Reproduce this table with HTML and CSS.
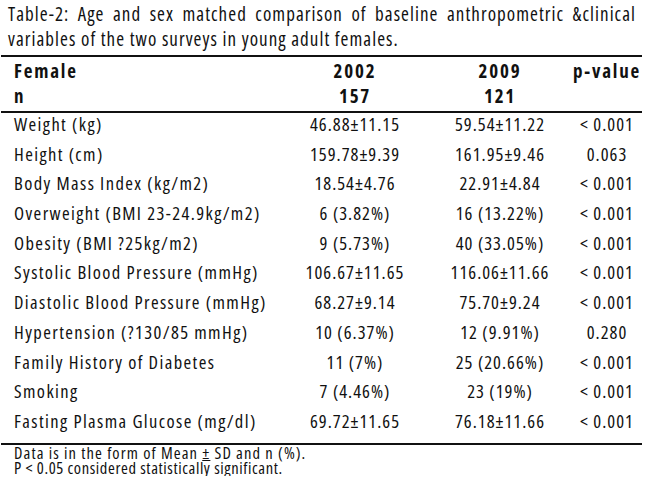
FILE: index.html
```html
<!DOCTYPE html>
<html>
<head>
<meta charset="utf-8">
<link rel="stylesheet" href="styles.css">
</head>
<body>
<div class="page">
  <p class="title"><span class="t1">Table-2: Age and sex matched comparison of baseline anthropometric &amp;clinical</span><span class="t2">variables of the two surveys in young adult females.</span></p>
  <div class="table">
    <div class="row head">
      <div class="c label">Female<br>n</div>
      <div class="c">2002<br>157</div>
      <div class="c">2009<br>121</div>
      <div class="c">p-value</div>
    </div>
    <div class="body">
      <div class="row"><div class="c label">Weight (kg)</div><div class="c">46.88±11.15</div><div class="c">59.54±11.22</div><div class="c">&lt; 0.001</div></div>
      <div class="row"><div class="c label">Height (cm)</div><div class="c">159.78±9.39</div><div class="c">161.95±9.46</div><div class="c">0.063</div></div>
      <div class="row"><div class="c label">Body Mass Index (kg/m2)</div><div class="c">18.54±4.76</div><div class="c">22.91±4.84</div><div class="c">&lt; 0.001</div></div>
      <div class="row"><div class="c label">Overweight (BMI 23-24.9kg/m2)</div><div class="c">6 (3.82%)</div><div class="c">16 (13.22%)</div><div class="c">&lt; 0.001</div></div>
      <div class="row"><div class="c label">Obesity (BMI ?25kg/m2)</div><div class="c">9 (5.73%)</div><div class="c">40 (33.05%)</div><div class="c">&lt; 0.001</div></div>
      <div class="row"><div class="c label">Systolic Blood Pressure (mmHg)</div><div class="c">106.67±11.65</div><div class="c">116.06±11.66</div><div class="c">&lt; 0.001</div></div>
      <div class="row"><div class="c label">Diastolic Blood Pressure (mmHg)</div><div class="c">68.27±9.14</div><div class="c">75.70±9.24</div><div class="c">&lt; 0.001</div></div>
      <div class="row"><div class="c label">Hypertension (?130/85 mmHg)</div><div class="c">10 (6.37%)</div><div class="c">12 (9.91%)</div><div class="c">0.280</div></div>
      <div class="row"><div class="c label">Family History of Diabetes</div><div class="c">11 (7%)</div><div class="c">25 (20.66%)</div><div class="c">&lt; 0.001</div></div>
      <div class="row"><div class="c label">Smoking</div><div class="c">7 (4.46%)</div><div class="c">23 (19%)</div><div class="c">&lt; 0.001</div></div>
      <div class="row"><div class="c label">Fasting Plasma Glucose (mg/dl)</div><div class="c">69.72±11.65</div><div class="c">76.18±11.66</div><div class="c">&lt; 0.001</div></div>
    </div>
  </div>
  <div class="notes">
    <p>Data is in the form of Mean <span class="pm">±</span> SD and n (%).</p>
    <p class="sig">P &lt; 0.05 considered statistically significant.</p>
  </div>
</div>
</body>
</html>
```
FILE: styles.css
```css
html, body {
  margin: 0;
  padding: 0;
  background: #ffffff;
}
.page {
  font-family: "Open Sans", "Liberation Sans", sans-serif;
  font-stretch: 75%;
  color: #111111;
  width: 650px;
}
.title {
  margin: 2px 14px 0 8px;
  font-size: 19px;
  line-height: 24.5px;
  letter-spacing: 1.05px;
}
.t1 {
  display: block;
  text-align: justify;
  text-align-last: justify;
  white-space: nowrap;
}
.t2 {
  display: block;
  white-space: nowrap;
}
.table {
  margin: 4px 8px 0 1px;
  border-top: 2px solid #111111;
  border-bottom: 2px solid #111111;
}
.body {
  padding-bottom: 3px;
}
.row {
  display: grid;
  grid-template-columns: 281px 146px 144px 70px;
  font-size: 18.5px;
  line-height: 21.6px;
  letter-spacing: 1px;
  padding-bottom: 8.1px;
  white-space: nowrap;
}
.c {
  text-align: center;
}
.c.label {
  text-align: left;
  padding-left: 13px;
  letter-spacing: 1.4px;
}
.row.head {
  font-weight: 700;
  font-size: 19px;
  line-height: 25px;
  letter-spacing: 1.8px;
  padding-top: 2px;
  padding-bottom: 2px;
  border-bottom: 2px solid #111111;
}
.row.head .c.label {
  letter-spacing: 1.8px;
}
.notes {
  margin: 0 0 0 14px;
  font-size: 16.5px;
  line-height: 15.5px;
  letter-spacing: 1.1px;
}
.notes p {
  margin: 0;
}
.notes .sig {
  letter-spacing: 0.6px;
}
.pm {
  text-decoration: underline;
}
```
